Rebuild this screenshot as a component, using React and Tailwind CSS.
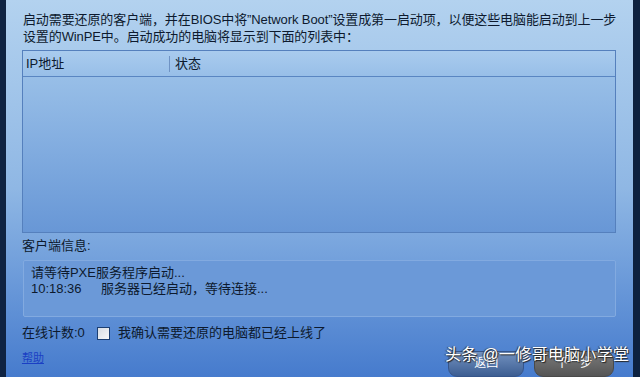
import React from 'react';

const font = { fontFamily: '"Liberation Sans", "Noto Sans CJK SC", sans-serif' };

const App = () => {
  return (
    <div
      className="w-[640px] h-[377px] overflow-hidden flex bg-[#0c1f3c] text-[13px] text-[#0d1a2e]"
      style={font}
    >
      <div className="w-[7px] bg-[#0f2342]" />
      <div className="relative flex-1 flex flex-col pl-[16px] pr-[17px] bg-gradient-to-b from-[#b3d2ef] via-[#8fb7e4] to-[#467bcd]">
        <div className="pt-[11px] leading-[17px] pl-[1px] whitespace-nowrap tracking-[-0.1px]">
          <p>启动需要还原的客户端，并在BIOS中将”Network Boot”设置成第一启动项，以便这些电脑能启动到上一步</p>
          <p>设置的WinPE中。启动成功的电脑将显示到下面的列表中：</p>
        </div>

        <div className="mt-[5px] h-[187px] border border-[#5580bd] flex flex-col bg-gradient-to-b from-[#a0c5ea] to-[#6897d6]">
          <div className="h-[26px] flex items-center border-b border-[#5a86c2] bg-gradient-to-b from-[#a9cbee] to-[#98bfe8]">
            <div className="w-[147px] pl-[3px] border-r border-[#6f93c4] h-[16px] flex items-center">IP地址</div>
            <div className="pl-[5px]">状态</div>
          </div>
          <div className="flex-1" />
        </div>

        <div className="mt-[5px] leading-[16px]">客户端信息:</div>

        <div className="mt-[6px] ml-[1px] h-[58px] rounded-[2px] border border-[#82aae0] bg-[#6b99d8] pl-[7px] pt-[4px] leading-[16px]">
          <p>请等待PXE服务程序启动...</p>
          <p>
            <span className="inline-block w-[70px]">10:18:36</span>
            服务器已经启动，等待连接...
          </p>
        </div>

        <div className="mt-[8px] flex items-center h-[16px]">
          <span className="w-[75px]">在线计数:0</span>
          <span className="w-[13px] h-[13px] border border-[#1c3f73] bg-gradient-to-br from-[#d8dde4] to-[#f7f8fa]" />
          <span className="ml-[8px]">我确认需要还原的电脑都已经上线了</span>
        </div>

        <div className="mt-[9px] flex items-start">
          <span className="text-[11px] text-[#1a3fc4] underline">帮助</span>
          <div className="ml-auto flex gap-[10px] mt-[1px] mr-[2px]">
            <div className="w-[76px] h-[26px] rounded-[9px] bg-gradient-to-b from-[#7392c0] to-[#3d5e92] border border-[#36558a] flex justify-center pt-[2px] text-white text-[12px]">
              返回
            </div>
            <div className="w-[80px] h-[26px] rounded-[9px] bg-gradient-to-b from-[#7c7c7c] to-[#555] border border-[#4a4a4a] flex justify-center pt-[2px] text-white text-[12px]">
              下一步
            </div>
          </div>
        </div>

        <div
          className="absolute left-[439px] top-[344px] text-[16px] leading-[22px] tracking-[0.3px] text-white whitespace-nowrap"
          style={{ textShadow: '1px 1px 1px #222, -1px 0 1px #333' }}
        >
          头条 @一修哥电脑小学堂
        </div>
      </div>
      <div className="w-[8px] bg-[#0d213f]" />
    </div>
  );
};

export default App;
